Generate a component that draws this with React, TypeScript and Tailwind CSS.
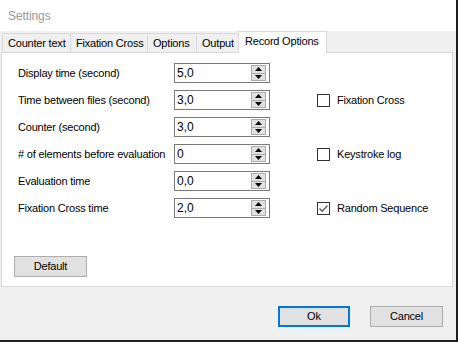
import React from "react";

const font = { fontFamily: '"Liberation Sans", Arial, sans-serif' };

function Spin({ value }: { value: string }) {
  return (
    <div className="flex h-[20px] w-[96px] items-center border border-[#7a7a7a] bg-white pl-[2px]">
      <span className="flex-1 text-[12px] leading-none text-black">{value}</span>
      <div className="mr-[3px] flex h-[16px] w-[15px] flex-col border border-[#acacac] bg-[#e1e1e1]">
        <div className="flex flex-1 items-center justify-center border-b border-[#acacac]">
          <svg width="7" height="4" viewBox="0 0 7 4"><path d="M0 4 L3.5 0 L7 4 Z" fill="#000" /></svg>
        </div>
        <div className="flex flex-1 items-center justify-center">
          <svg width="7" height="4" viewBox="0 0 7 4"><path d="M0 0 L7 0 L3.5 4 Z" fill="#000" /></svg>
        </div>
      </div>
    </div>
  );
}

function Check({ label, checked }: { label: string; checked?: boolean }) {
  return (
    <div className="flex items-center gap-[7px]">
      <div className="flex h-[13px] w-[13px] items-center justify-center border border-[#333333] bg-white">
        {checked && (
          <svg width="11" height="11" viewBox="0 0 11 11">
            <path d="M1.5 5.5 L4.2 8.2 L9.5 2.5" stroke="#5a5a5a" strokeWidth="1.3" fill="none" />
          </svg>
        )}
      </div>
      <span className="whitespace-nowrap text-[11px] tracking-[-0.2px] text-black">{label}</span>
    </div>
  );
}

const rows = [
  ["Display time (second)", "5,0"],
  ["Time between files (second)", "3,0"],
  ["Counter (second)", "3,0"],
  ["# of elements before evaluation", "0"],
  ["Evaluation time", "0,0"],
  ["Fixation Cross time", "2,0"],
];

const checks: Record<number, [string, boolean]> = {
  1: ["Fixation Cross", false],
  3: ["Keystroke log", false],
  5: ["Random Sequence", true],
};

const tabs: [string, number][] = [
  ["Counter text", 68],
  ["Fixation Cross", 77],
  ["Options", 49],
  ["Output", 42],
];

export default function App() {
  return (
    <div className="h-[342px] w-[458px] bg-[#1f1f1f]" style={font}>
      <div className="flex h-[340px] w-[456px] flex-col bg-[#f0f0f0]">
        <div className="flex h-[31px] items-center bg-white pl-[8px] text-[12px] tracking-[-0.1px] text-[#999999]">
          Settings
        </div>
        <div className="flex h-[21px] items-end pl-[2px]">
          {tabs.map(([t, w], i) => (
            <div
              key={i}
              style={{ width: w }}
              className="flex h-[19px] items-center whitespace-nowrap border-l border-t border-[#d9d9d9] bg-[#f0f0f0] pl-[5px] text-[11px] tracking-[-0.2px] text-black"
            >
              {t}
            </div>
          ))}
          <div className="relative z-10 -mb-px flex h-[22px] w-[89px] items-center whitespace-nowrap border-x border-t border-[#d9d9d9] bg-white pb-[2px] pl-[6px] text-[11px] tracking-[-0.2px] text-black">
            Record Options
          </div>
        </div>
        <div className="ml-[1px] flex h-[235px] w-[452px] flex-col border border-[#d9d9d9] bg-white pl-[16px] pt-[10px]">
          <div className="grid grid-cols-[156px_96px_47px_auto] gap-y-[7px]">
            {rows.map(([l, v], i) => (
              <React.Fragment key={i}>
                <div className="flex h-[20px] items-center whitespace-nowrap text-[11px] tracking-[-0.2px] text-black">{l}</div>
                <Spin value={v} />
                <div />
                <div className="flex h-[20px] items-center">
                  {checks[i] && <Check label={checks[i][0]} checked={checks[i][1]} />}
                </div>
              </React.Fragment>
            ))}
          </div>
          <div className="mt-[38px] -ml-[4px] flex h-[21px] w-[73px] items-center justify-center border border-[#adadad] bg-[#e1e1e1] text-[11px] tracking-[-0.2px] text-black">
            Default
          </div>
        </div>
        <div className="flex flex-1 items-start gap-[20px] pl-[278px] pt-[19px]">
          <div className="flex h-[21px] w-[72px] items-center justify-center border-2 border-[#0078d7] bg-[#e1e1e1] text-[11px] text-black">
            Ok
          </div>
          <div className="flex h-[21px] w-[73px] items-center justify-center border border-[#adadad] bg-[#e1e1e1] text-[11px] tracking-[-0.2px] text-black">
            Cancel
          </div>
        </div>
      </div>
    </div>
  );
}
